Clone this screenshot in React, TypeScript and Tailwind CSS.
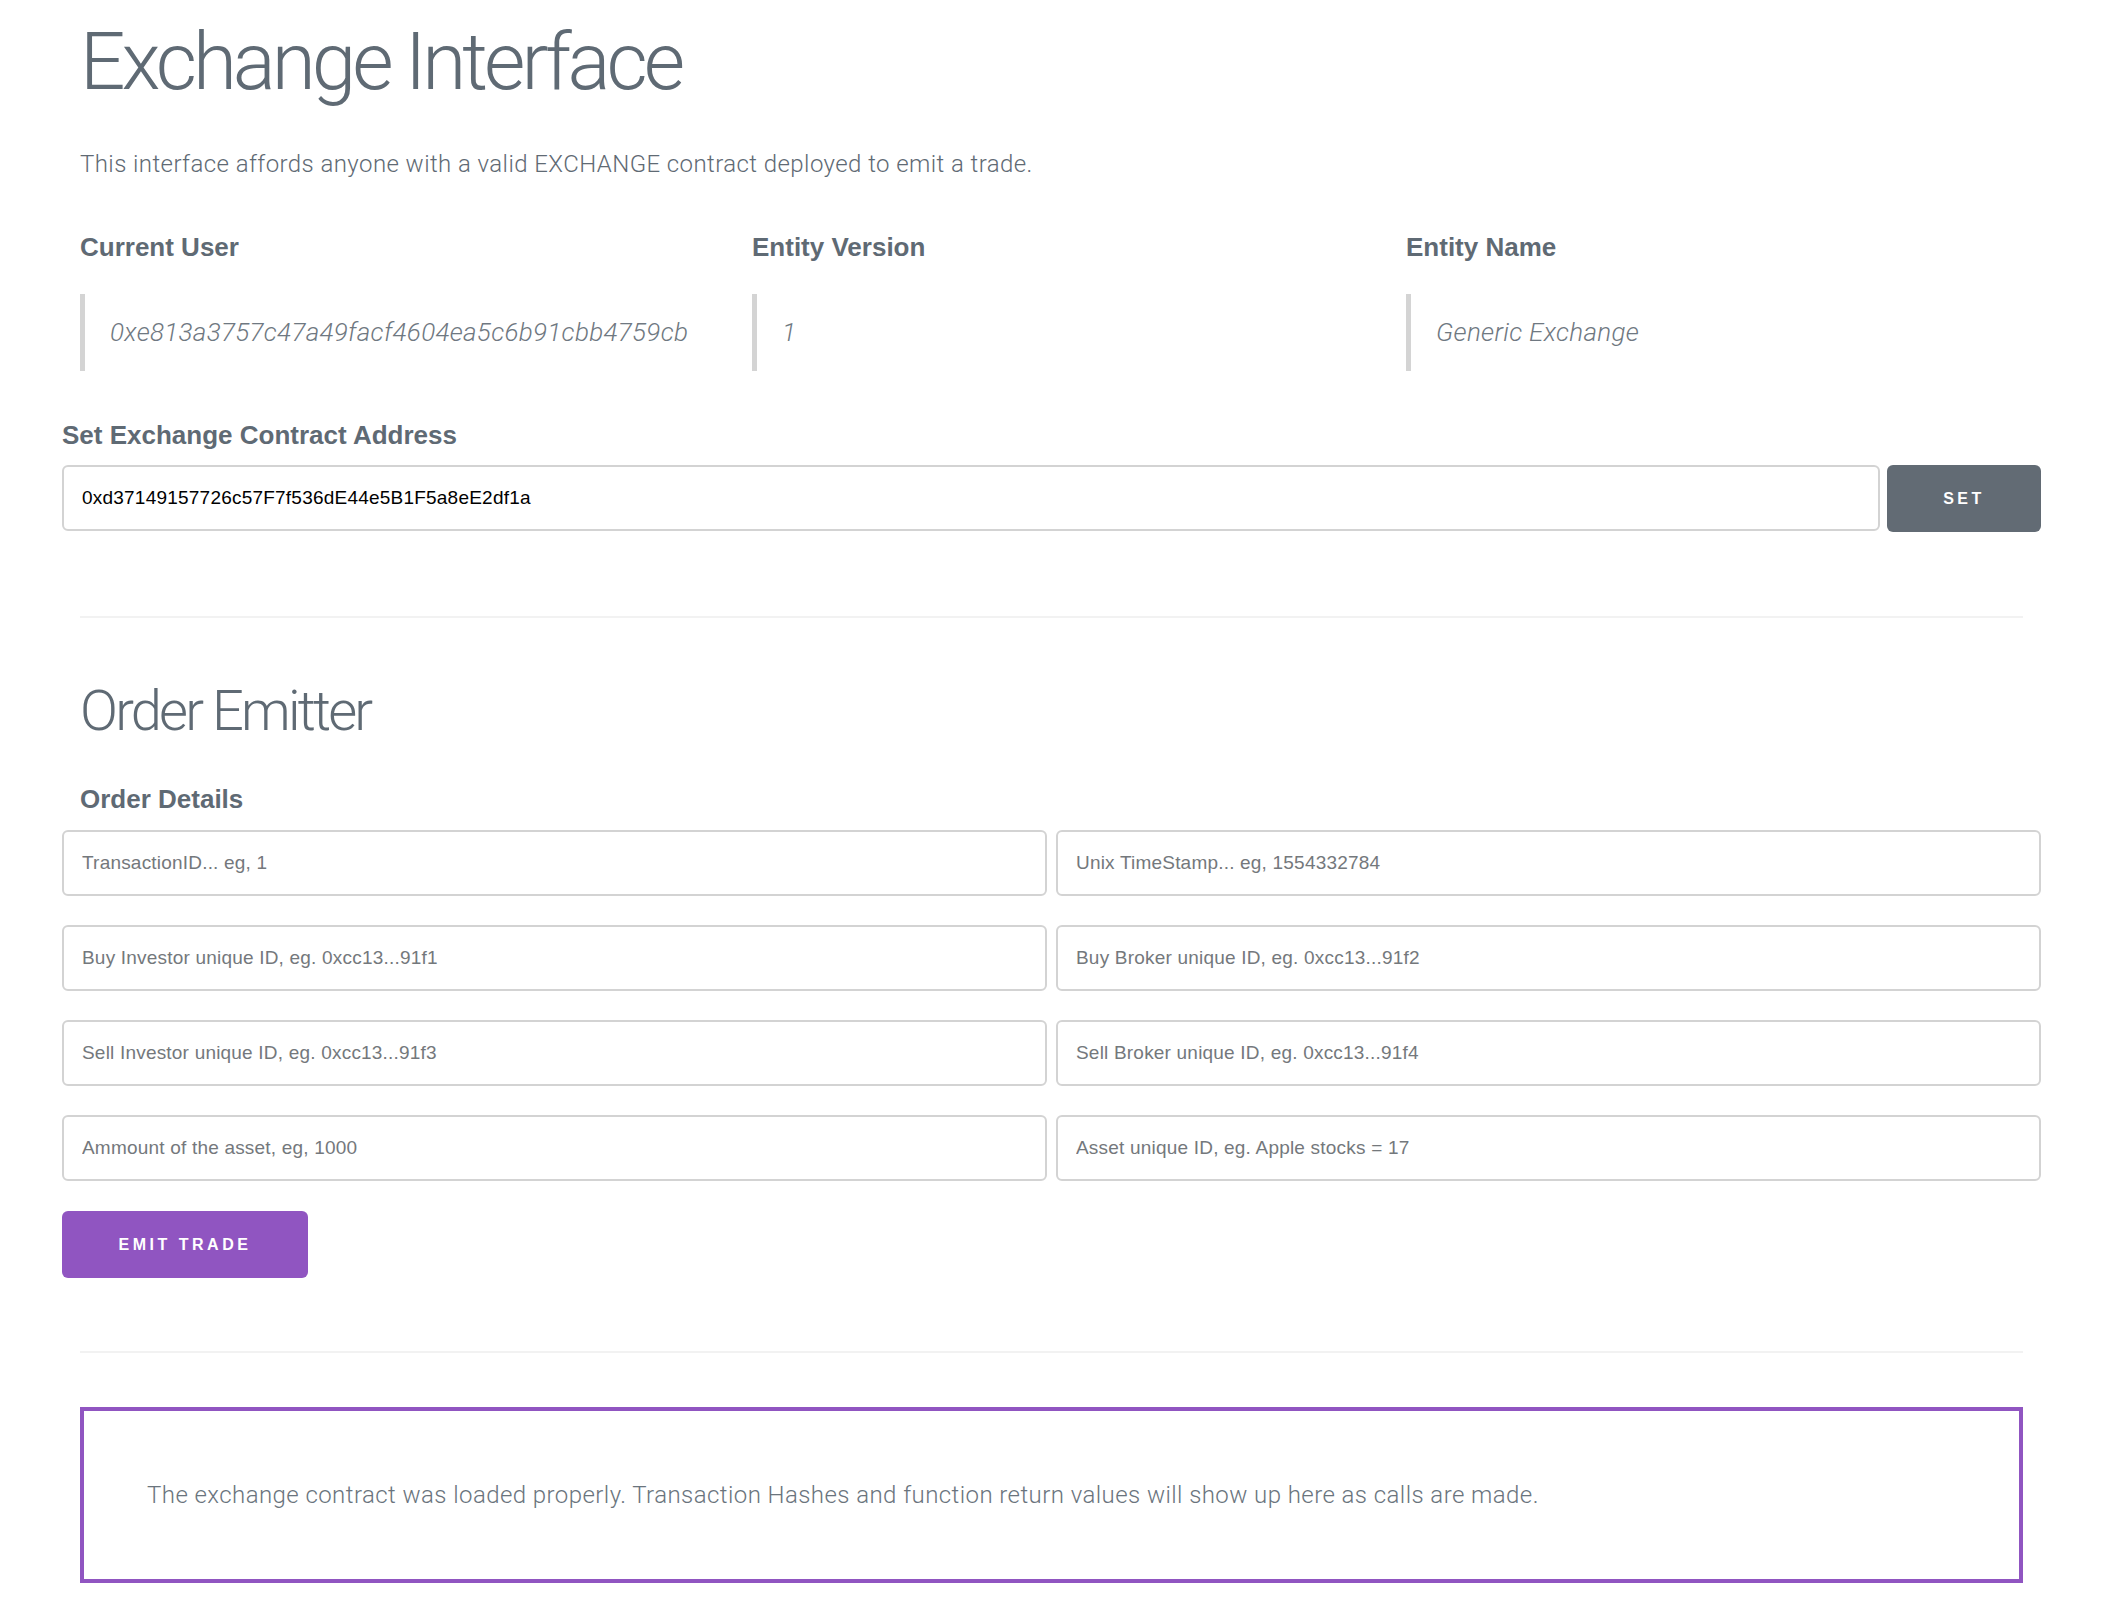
import React from "react";

const inputs: [string, string][] = [
  ["TransactionID... eg, 1", "Unix TimeStamp... eg, 1554332784"],
  ["Buy Investor unique ID, eg. 0xcc13...91f1", "Buy Broker unique ID, eg. 0xcc13...91f2"],
  ["Sell Investor unique ID, eg. 0xcc13...91f3", "Sell Broker unique ID, eg. 0xcc13...91f4"],
  ["Ammount of the asset, eg, 1000", "Asset unique ID, eg. Apple stocks = 17"],
];

function InfoCol({ label, value }: { label: string; value: string }) {
  return (
    <div>
      <h4 className="font-['Liberation_Sans',Arial,sans-serif] text-[26px] font-bold leading-none text-[#5f6a74]">
        {label}
      </h4>
      <div className="mt-[34px] flex h-[77px] items-center border-l-[5px] border-[#d4d4d4] pl-[25px] text-[26px] font-light italic tracking-[0.3px] text-[#6f7881]">
        {value}
      </div>
    </div>
  );
}

export default function App() {
  return (
    <div className="min-h-[1618px] w-[2110px] bg-white font-['Roboto',sans-serif] text-[#5f6a74]">
      <div className="ml-[62px] w-[1979px] pb-[37px]">
        <div className="px-[18px]">
          <h1 className="pt-[22px] text-[80px] font-light leading-none tracking-[-4px]">
            Exchange Interface
          </h1>
          <p className="mt-[50px] text-[24px] font-light leading-none tracking-[0.42px]">
            This interface affords anyone with a valid EXCHANGE contract deployed to emit a trade.
          </p>
          <div className="mt-[58px] grid grid-cols-[672px_654px_1fr]">
            <InfoCol label="Current User" value="0xe813a3757c47a49facf4604ea5c6b91cbb4759cb" />
            <InfoCol label="Entity Version" value="1" />
            <InfoCol label="Entity Name" value="Generic Exchange" />
          </div>
        </div>

        <h4 className="mt-[51px] font-['Liberation_Sans',Arial,sans-serif] text-[26px] font-bold leading-none">
          Set Exchange Contract Address
        </h4>
        <div className="mt-[17px] flex gap-[7px]">
          <input
            className="h-[66px] flex-1 rounded-[6px] border-2 border-[#d3d3d3] bg-white px-[18px] font-['Liberation_Sans',Arial,sans-serif] text-[19px] tracking-[0.22px] text-black outline-none"
            defaultValue="0xd37149157726c57F7f536dE44e5B1F5a8eE2df1a"
          />
          <button className="h-[67px] w-[154px] rounded-[6px] bg-[#626b74] font-['Liberation_Sans',Arial,sans-serif] text-[16px] font-bold tracking-[3.5px] text-white">
            SET
          </button>
        </div>

        <div className="mx-[18px] mt-[84px] h-[2px] bg-[#f2f2f2]" />

        <div className="px-[18px]">
          <h2 className="mt-[65px] text-[56px] font-light leading-none tracking-[-2.8px]">Order Emitter</h2>
          <h4 className="mt-[47px] font-['Liberation_Sans',Arial,sans-serif] text-[26px] font-bold leading-none">
            Order Details
          </h4>
        </div>

        <div className="mt-[18px] grid grid-cols-2 gap-x-[9px] gap-y-[29px]">
          {inputs.flat().map((p) => (
            <input
              key={p}
              placeholder={p}
              className="h-[66px] w-full rounded-[6px] border-2 border-[#d3d3d3] bg-white px-[18px] font-['Liberation_Sans',Arial,sans-serif] text-[19px] tracking-[0.2px] text-black outline-none placeholder:text-[#74787c]"
            />
          ))}
        </div>

        <button className="mt-[30px] h-[67px] w-[246px] rounded-[6px] bg-[#9055c1] font-['Liberation_Sans',Arial,sans-serif] text-[16px] font-bold tracking-[3.5px] text-white">
          EMIT TRADE
        </button>

        <div className="mx-[18px] mt-[73px] h-[2px] bg-[#f2f2f2]" />

        <div className="mx-[18px] mt-[54px] border-[4px] border-[#9055c1] px-[63px] py-[66px]">
          <p className="text-[24px] font-light leading-[36px] tracking-[0.43px] text-[#6a747d]">
            The exchange contract was loaded properly. Transaction Hashes and function return values will show up here as calls are made.
          </p>
        </div>
      </div>
    </div>
  );
}
